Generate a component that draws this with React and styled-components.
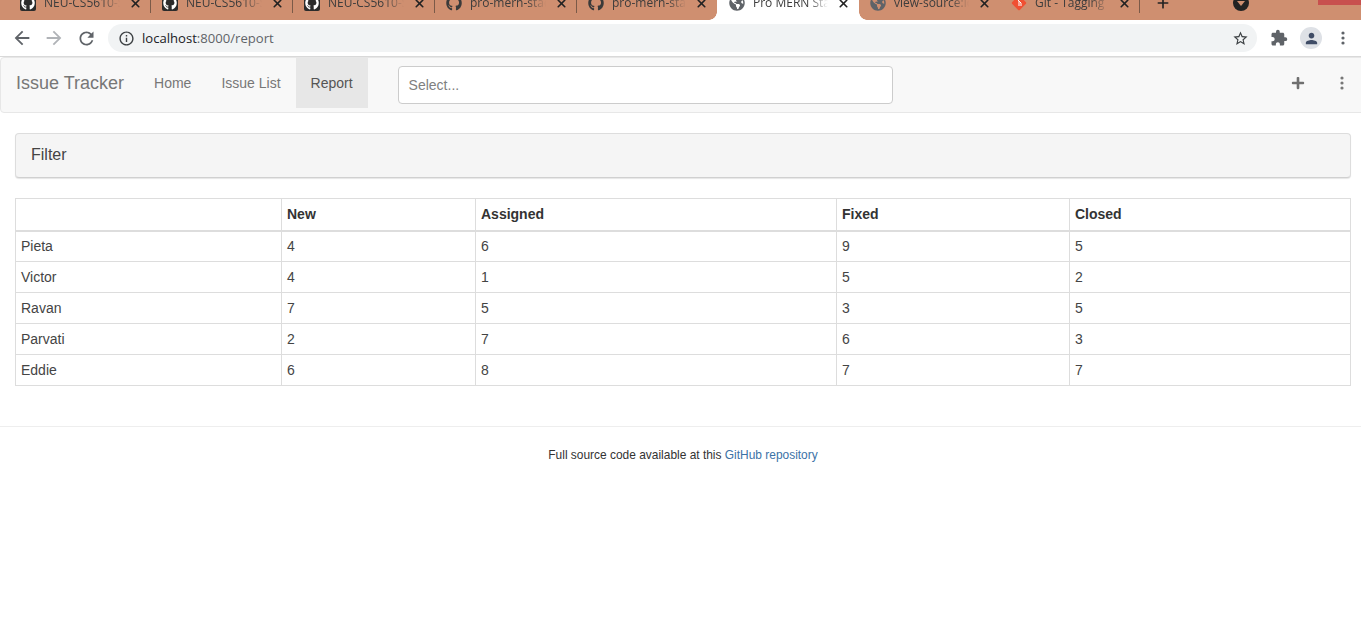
import React from "react";
import styled, { createGlobalStyle } from "styled-components";
import { FaGithub, FaGlobeAmericas, FaPlus } from "react-icons/fa";
import { X, Plus } from "lucide-react";

const Global = createGlobalStyle`
  html, body { margin: 0; padding: 0; background: #fff; }
  body { font-family: "Liberation Sans", Arial, sans-serif; font-size: 14px; color: #333; width: 1361px; height: 617px; overflow: hidden; }
  * { box-sizing: border-box; }
`;

const Strip = styled.div`
  height: 20px;
  background: #cf8f70;
  display: flex;
  align-items: flex-end;
  padding-left: 9px;
  overflow: hidden;
  position: relative;
`;
const Tab = styled.div`
  flex: none;
  width: ${p => p.$w || 142}px;
  height: 30px;
  display: flex;
  align-items: flex-start;
  padding: 5px 9px 0 ${p => (p.$active ? 12 : 11)}px;
  gap: 8px;
  position: relative;
  background: ${p => (p.$active ? "#fff" : "transparent")};
  border-radius: ${p => (p.$active ? "8px 8px 0 0" : "0")};
  color: #3c3c3c;
  ${p => p.$sep && `
    &::after {
      content: "";
      position: absolute;
      right: 0;
      top: 8px;
      width: 1px;
      height: 15px;
      background: #7b5a48;
    }
  `}
  ${p => p.$active && `
    &::before, &::after {
      content: "";
      position: absolute;
      bottom: 0;
      width: 8px;
      height: 8px;
    }
    &::before {
      left: -8px;
      background: radial-gradient(circle at 0 0, transparent 7.5px, #fff 8px);
    }
    &::after {
      right: -8px;
      background: radial-gradient(circle at 100% 0, transparent 7.5px, #fff 8px);
    }
  `}
`;
const TabIcon = styled.span`
  flex: none;
  width: 16px;
  height: 16px;
  display: flex;
  align-items: center;
  justify-content: center;
  border-radius: 2px;
  background: ${p => p.$bg || "transparent"};
  color: ${p => p.$color || "#2a2a2a"};
`;
const TabTitle = styled.span`
  flex: 1;
  min-width: 0;
  white-space: nowrap;
  overflow: hidden;
  font-family: "Open Sans", sans-serif;
  font-size: 12px;
  line-height: 16px;
  -webkit-mask-image: linear-gradient(90deg, #000 75%, transparent 100%);
  mask-image: linear-gradient(90deg, #000 75%, transparent 100%);
`;
const TabClose = styled.span`
  flex: none;
  display: flex;
  width: 14px;
  height: 16px;
  align-items: center;
  justify-content: center;
  color: #222;
`;
const NewTab = styled.span`
  flex: none;
  display: flex;
  margin: 0 0 9px 15px;
  color: #222;
`;
const Drop = styled.span`
  position: absolute;
  left: 1233px;
  top: -5px;
  width: 16px;
  height: 16px;
  border-radius: 50%;
  background: #222;
  &::after {
    content: "";
    position: absolute;
    left: 4px;
    top: 6px;
    border: 4px solid transparent;
    border-top: 5px solid #cf8f70;
  }
`;
const RedBar = styled.span`
  position: absolute;
  right: 0;
  top: 0;
  width: 43px;
  height: 5px;
  background: #c8504e;
`;

const Toolbar = styled.div`
  height: 37px;
  background: #fff;
  border-bottom: 1px solid #d9d9d9;
  display: flex;
  align-items: flex-start;
  padding: 4px 0 0 12px;
  color: #5f6368;
`;
const NavIcon = styled.span`
  flex: none;
  width: 20px;
  height: 28px;
  margin-right: 12px;
  display: flex;
  align-items: center;
  justify-content: center;
  color: ${p => p.$color || "#5f6368"};
`;
const Omnibox = styled.div`
  flex: none;
  width: 1149px;
  height: 28px;
  border-radius: 14px;
  background: #f1f3f4;
  display: flex;
  align-items: center;
  padding: 0 8px 0 10px;
  gap: 7px;
  color: #3c4043;
`;
const Url = styled.span`
  flex: 1;
  font-family: "Open Sans", sans-serif;
  font-size: 13.1px;
  color: #5f6368;
  b { font-weight: 400; color: #202124; }
`;
const Extensions = styled.div`
  display: flex;
  align-items: center;
  height: 28px;
  margin-left: 13px;
  color: #5f6368;
`;
const Avatar = styled.span`
  width: 22px;
  height: 22px;
  margin-left: 12px;
  border-radius: 50%;
  background: #dee1e6;
  color: #3f4c66;
  display: flex;
  align-items: center;
  justify-content: center;
`;
const MenuSlot = styled.span`
  display: flex;
  margin-left: 19px;
`;
const Kebab = styled.svg`
  flex: none;
  display: block;
`;

const Navbar = styled.nav`
  width: 1366px;
  height: 56px;
  background: #f8f8f8;
  border: 1px solid #e7e7e7;
  border-radius: 4px;
  display: flex;
  align-items: flex-start;
  padding-left: 15px;
`;
const Brand = styled.a`
  font-size: 18px;
  line-height: 50px;
  color: #777;
  margin-right: 15px;
`;
const NavLink = styled.a`
  height: 50px;
  line-height: 50px;
  padding: 0 15px;
  color: ${p => (p.$active ? "#555" : "#777")};
  background: ${p => (p.$active ? "#e7e7e7" : "transparent")};
`;
const SelectBox = styled.div`
  width: 495px;
  height: 38px;
  margin: 8px 0 0 30px;
  background: #fff;
  border: 1px solid #ccc;
  border-radius: 4px;
  padding-left: 10px;
  line-height: 37px;
  font-size: 14px;
  color: #808080;
`;
const NavRight = styled.div`
  margin-left: auto;
  height: 50px;
  display: flex;
  align-items: center;
  color: #6f6f6f;
  padding-right: 21px;
  gap: 35px;
`;

const Main = styled.main`
  padding: 20px 10px 0 15px;
`;
const Panel = styled.div`
  height: 45px;
  background: #f5f5f5;
  border: 1px solid #ddd;
  border-bottom-color: #d0d0d0;
  border-radius: 4px;
  box-shadow: 0 1px 1px rgba(0, 0, 0, 0.1);
  padding: 0 15px;
  font-size: 16px;
  line-height: 41px;
  color: #444;
`;
const Table = styled.table`
  width: 1335px;
  margin-top: 20px;
  border-collapse: collapse;
  table-layout: fixed;
`;
const Th = styled.th`
  height: 32px;
  padding: 5px;
  text-align: left;
  font-weight: 700;
  border: 1px solid #ddd;
  border-bottom: 2px solid #ddd;
  color: #333;
`;
const Td = styled.td`
  height: 31px;
  padding: 5px;
  border: 1px solid #ddd;
  color: #444;
`;

const Footer = styled.footer`
  margin-top: 40px;
  border-top: 1px solid #eee;
  padding-top: 20px;
  text-align: center;
  font-size: 11.95px;
  line-height: 17px;
  color: #333;
  width: 1366px;
  a { color: #3b72a6; }
`;

const paths = {
  back: "M20 11H7.83l5.59-5.59L12 4l-8 8 8 8 1.41-1.41L7.83 13H20v-2z",
  forward: "M12 4l-1.41 1.41L16.17 11H4v2h12.17l-5.58 5.59L12 20l8-8z",
  reload: "M17.65 6.35C16.2 4.9 14.21 4 12 4c-4.42 0-7.99 3.58-7.99 8s3.57 8 7.99 8c3.73 0 6.84-2.55 7.73-6h-2.08c-.82 2.33-3.04 4-5.65 4-3.31 0-6-2.69-6-6s2.69-6 6-6c1.66 0 3.14.69 4.22 1.78L13 11h7V4l-2.35 2.35z",
  info: "M11 7h2v2h-2zm0 4h2v6h-2zm1-9C6.48 2 2 6.48 2 12s4.48 10 10 10 10-4.48 10-10S17.52 2 12 2zm0 18c-4.41 0-8-3.59-8-8s3.59-8 8-8 8 3.59 8 8-3.59 8-8 8z",
  star: "M22 9.24l-7.19-.62L12 2 9.19 8.63 2 9.24l5.46 4.73L5.82 21 12 17.27 18.18 21l-1.63-7.03L22 9.24zM12 15.4l-3.76 2.27 1-4.28-3.32-2.88 4.38-.38L12 6.1l1.71 4.04 4.38.38-3.32 2.88 1 4.28L12 15.4z",
  extension: "M20.5 11H19V7c0-1.1-.9-2-2-2h-4V3.5a2.5 2.5 0 0 0-5 0V5H4c-1.1 0-1.99.9-1.99 2v3.8H3.5c1.49 0 2.7 1.21 2.7 2.7s-1.21 2.7-2.7 2.7H2V20c0 1.1.9 2 2 2h3.8v-1.5c0-1.49 1.21-2.7 2.7-2.7 1.49 0 2.7 1.21 2.7 2.7V22H17c1.1 0 2-.9 2-2v-4h1.5a2.5 2.5 0 0 0 0-5z",
  person: "M12 12c2.21 0 4-1.79 4-4s-1.79-4-4-4-4 1.79-4 4 1.79 4 4 4zm0 2c-2.67 0-8 1.34-8 4v2h16v-2c0-2.66-5.33-4-8-4z",
};

const Mat = ({ name, size = 20 }) => (
  <svg width={size} height={size} viewBox="0 0 24 24" fill="currentColor" style={{ flex: "none" }}>
    <path d={paths[name]} />
  </svg>
);

const tabs = [
  { title: "NEU-CS5610-SU20", icon: "square", sep: true },
  { title: "NEU-CS5610-SU20", icon: "square", sep: true },
  { title: "NEU-CS5610-SU20", icon: "square", sep: true },
  { title: "pro-mern-stack-2", icon: "cat", sep: true },
  { title: "pro-mern-stack-2", icon: "cat", w: 140 },
  { title: "Pro MERN Stack", icon: "globe", active: true },
  { title: "view-source:localhost", icon: "globe", w: 141 },
  { title: "Git - Tagging", icon: "git", sep: true, w: 140 },
];
const columns = [266, 194, 361, 233, 281];
const headers = ["", "New", "Assigned", "Fixed", "Closed"];
const rows = [
  ["Pieta", 4, 6, 9, 5],
  ["Victor", 4, 1, 5, 2],
  ["Ravan", 7, 5, 3, 5],
  ["Parvati", 2, 7, 6, 3],
  ["Eddie", 6, 8, 7, 7],
];

const Dots = ({ color }) => (
  <Kebab width="4" height="14" viewBox="0 0 4 14" fill={color}>
    <circle cx="2" cy="2" r="1.6" />
    <circle cx="2" cy="7" r="1.6" />
    <circle cx="2" cy="12" r="1.6" />
  </Kebab>
);

const GitLogo = () => (
  <svg width="18" height="18" viewBox="0 0 18 18" style={{ margin: "-1px" }}>
    <rect x="3.5" y="3.5" width="11" height="11" rx="1.5" fill="#f05033" transform="rotate(45 9 9)" />
    <path d="M7 5l4 4v3M9 7v5" stroke="#fff" strokeWidth="1" fill="none" />
  </svg>
);

function TabGlyph({ kind }) {
  if (kind === "square") return <TabIcon $bg="#2b2b2b" $color="#fff"><FaGithub size={14} /></TabIcon>;
  if (kind === "cat") return <TabIcon $color="#3a3a3a"><FaGithub size={16} /></TabIcon>;
  if (kind === "git") return <TabIcon><GitLogo /></TabIcon>;
  return <TabIcon $color="#5f6368"><FaGlobeAmericas size={16} /></TabIcon>;
}

export default function App() {
  return (
    <>
      <Global />
      <Strip>
        {tabs.map((t, i) => (
          <Tab key={i} $active={t.active} $sep={t.sep} $w={t.w}>
            <TabGlyph kind={t.icon} />
            <TabTitle>{t.title}</TabTitle>
            <TabClose><X size={13} strokeWidth={3} /></TabClose>
          </Tab>
        ))}
        <NewTab><Plus size={16} strokeWidth={2.5} /></NewTab>
        <Drop />
        <RedBar />
      </Strip>
      <Toolbar>
        <NavIcon><Mat name="back" size={22} /></NavIcon>
        <NavIcon $color="#b0b3b7"><Mat name="forward" size={22} /></NavIcon>
        <NavIcon><Mat name="reload" size={21} /></NavIcon>
        <Omnibox>
          <Mat name="info" size={17} />
          <Url><b>localhost</b>:8000/report</Url>
          <Mat name="star" size={17} />
        </Omnibox>
        <Extensions>
          <Mat name="extension" size={18} />
          <Avatar><Mat name="person" size={17} /></Avatar>
          <MenuSlot><Dots color="#5f6368" /></MenuSlot>
        </Extensions>
      </Toolbar>
      <Navbar>
        <Brand>Issue Tracker</Brand>
        <NavLink>Home</NavLink>
        <NavLink>Issue List</NavLink>
        <NavLink $active>Report</NavLink>
        <SelectBox>Select...</SelectBox>
        <NavRight>
          <FaPlus size={14} />
          <Dots color="#777" />
        </NavRight>
      </Navbar>
      <Main>
        <Panel>Filter</Panel>
        <Table>
          <colgroup>
            {columns.map((w, i) => <col key={i} width={w} />)}
          </colgroup>
          <thead>
            <tr>{headers.map((h, i) => <Th key={i}>{h}</Th>)}</tr>
          </thead>
          <tbody>
            {rows.map(r => (
              <tr key={r[0]}>{r.map((c, i) => <Td key={i}>{c}</Td>)}</tr>
            ))}
          </tbody>
        </Table>
      </Main>
      <Footer>
        Full source code available at this <a>GitHub repository</a>
      </Footer>
    </>
  );
}
